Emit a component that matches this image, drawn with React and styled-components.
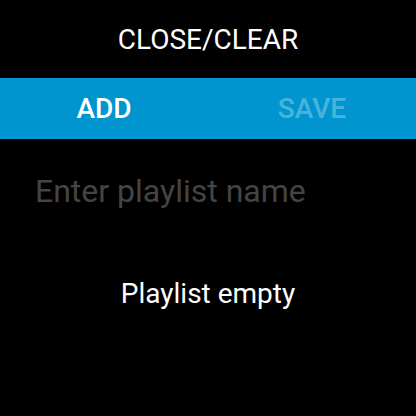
import React from "react";
import styled, { createGlobalStyle } from "styled-components";

const GlobalStyle = createGlobalStyle`
  html, body {
    margin: 0;
    padding: 0;
    background: #000;
  }
  body {
    font-family: Roboto, "Noto Sans", sans-serif;
  }
`;

const Screen = styled.div`
  width: 416px;
  height: 416px;
  background: #000;
  display: flex;
  flex-direction: column;
  overflow: hidden;
`;

const TopButton = styled.div`
  height: 78px;
  display: flex;
  align-items: center;
  justify-content: center;
  color: #fff;
  font-size: 28px;
  font-weight: 400;
`;

const ActionBar = styled.div`
  height: 61px;
  background: #0195cf;
  display: grid;
  grid-template-columns: 1fr 1fr;
`;

const Action = styled.div`
  display: flex;
  align-items: center;
  justify-content: center;
  font-size: 28px;
  font-weight: 500;
  color: ${(p) => (p.disabled ? "rgba(255,255,255,0.3)" : "#fff")};
`;

const NameInput = styled.input`
  margin: 33px 0 0 35px;
  padding: 0;
  border: none;
  outline: none;
  background: transparent;
  font-family: Roboto, sans-serif;
  font-size: 32px;
  color: #fff;
  width: 370px;
  &::placeholder {
    color: #444;
  }
`;

const Empty = styled.div`
  margin-top: 67px;
  text-align: center;
  color: #fff;
  font-size: 28px;
`;

export default function App() {
  return (
    <>
      <GlobalStyle />
      <Screen>
        <TopButton>CLOSE/CLEAR</TopButton>
        <ActionBar>
          <Action>ADD</Action>
          <Action disabled>SAVE</Action>
        </ActionBar>
        <NameInput placeholder="Enter playlist name" />
        <Empty>Playlist empty</Empty>
      </Screen>
    </>
  );
}
